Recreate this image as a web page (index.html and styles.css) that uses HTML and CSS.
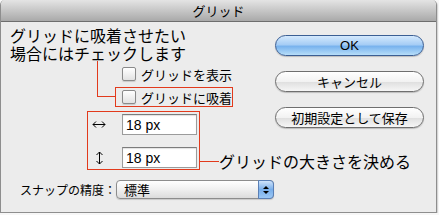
FILE: index.html
```html
<!DOCTYPE html>
<html>
 <head>
  <meta charset="utf-8">
  <title>グリッド</title>
  <link rel="stylesheet" href="styles.css">
 </head>
 <body>
  <div class="window">
   <div class="titlebar">グリッド</div>
   <div class="content">
    <div class="left">
     <p class="note">グリッドに吸着させたい<br>場合にはチェックします</p>
     <div class="check"><span class="box"></span>グリッドを表示</div>
     <div class="check marked"><span class="box"></span>グリッドに吸着</div>
     <div class="sizerow">
      <div class="sizebox">
       <div class="field">
        <span class="axis">
         <svg width="14" height="9" viewBox="0 0 14 9"><path d="M1 4.5H13M1 4.5L4 1.5M1 4.5L4 7.5M13 4.5L10 1.5M13 4.5L10 7.5" stroke="#000" stroke-width="1" fill="none"/></svg>
        </span>
        <input class="num" type="text" value="18 px">
       </div>
       <div class="field">
        <span class="axis">
         <svg width="9" height="14" viewBox="0 0 9 14"><path d="M4.5 1V13M4.5 1L1.5 4M4.5 1L7.5 4M4.5 13L1.5 10M4.5 13L7.5 10" stroke="#000" stroke-width="1" fill="none"/></svg>
        </span>
        <input class="num" type="text" value="18 px">
       </div>
      </div>
      <span class="leader"></span>
      <span class="note">グリッドの大きさを決める</span>
     </div>
     <div class="snap">
      <span class="label">スナップの精度：</span>
      <div class="popup">標準<span class="arrows"><i class="up"></i><i class="down"></i></span></div>
     </div>
    </div>
    <div class="buttons">
     <div class="btn default">OK</div>
     <div class="btn">キャンセル</div>
     <div class="btn">初期設定として保存</div>
    </div>
   </div>
   <span class="callout"></span>
  </div>
 </body>
</html>
```

FILE: styles.css
```css
body {
    margin: 0;
    background: #f7f7f7;
    font-family: "Noto Sans CJK JP", "Liberation Sans", sans-serif;
    color: #000;
}
.window {
    position: relative;
    width: 435px;
    height: 212px;
    border: 1px solid #8e8e8e;
    border-top: none;
    border-radius: 5px 5px 0 0;
    background: #ececec;
    box-shadow: 1px 1px 1px rgba(0, 0, 0, 0.15);
    overflow: hidden;
}
.titlebar {
    height: 21px;
    line-height: 21px;
    border-bottom: 1px solid #6e6e6e;
    background: linear-gradient(#e4e4e4, #a9a9a9);
    text-align: center;
    font-size: 13px;
}
.content {
    display: flex;
}
.left {
    width: 264px;
    padding-left: 9px;
    white-space: nowrap;
}
.note {
    margin: 4px 0 0 0;
    font-size: 16px;
    line-height: 18px;
}
.check {
    display: flex;
    align-items: center;
    width: 110px;
    height: 18px;
    margin: 2px 0 0 105px;
    padding-left: 6px;
    border: 1px solid transparent;
    font-size: 13px;
}
.check.marked {
    margin-top: 3px;
    border-color: #e23a1c;
}
.box {
    width: 12px;
    height: 12px;
    margin-right: 5px;
    border: 1px solid #8a8a8a;
    border-radius: 2px;
    background: linear-gradient(#ffffff, #e2e2e2);
    box-shadow: 0 1px 1px rgba(0, 0, 0, 0.15);
}
.sizerow {
    display: flex;
    align-items: flex-end;
    margin-top: 4px;
}
.sizebox {
    display: flex;
    flex-direction: column;
    flex-shrink: 0;
    gap: 12px;
    width: 109px;
    margin-left: 77px;
    padding: 2px 2px 1px 0;
    border: 1px solid #e23a1c;
}
.field {
    display: flex;
    align-items: center;
    justify-content: space-between;
}
.axis {
    display: flex;
    justify-content: center;
    width: 20px;
    margin-left: 1px;
}
.num {
    box-sizing: border-box;
    width: 75px;
    height: 21px;
    margin: 0;
    padding: 1px 3px 0;
    border: 1px solid #9b9b9b;
    border-top-color: #7c7c7c;
    box-shadow: inset 0 1px 1px rgba(0, 0, 0, 0.12);
    background: #fff;
    font-family: "Liberation Sans", sans-serif;
    font-size: 14px;
    color: #000;
}
.leader {
    flex-shrink: 0;
    width: 19px;
    margin-bottom: 8px;
    border-top: 1px solid #e23a1c;
}
.sizerow .note {
    margin: 0;
    line-height: 18px;
}
.snap {
    display: flex;
    align-items: center;
    margin: 10px 0 0 10px;
    font-size: 12px;
}
.label {
    width: 101px;
}
.popup {
    position: relative;
    box-sizing: border-box;
    width: 166px;
    height: 19px;
    padding-left: 7px;
    line-height: 17px;
    border: 1px solid #8d8d8d;
    border-radius: 4px;
    background: linear-gradient(#ffffff, #f0f0f0 50%, #dcdcdc);
    box-shadow: 0 1px 1px rgba(0, 0, 0, 0.15);
    font-size: 13px;
}
.arrows {
    position: absolute;
    top: -1px;
    right: -1px;
    width: 16px;
    height: 19px;
    border: 1px solid #5a7fb5;
    box-sizing: border-box;
    border-radius: 0 4px 4px 0;
    background: linear-gradient(#cfe3fb, #78aeea 50%, #9cc8f5);
    display: flex;
    flex-direction: column;
    align-items: center;
    justify-content: center;
    gap: 2px;
}
.up, .down {
    width: 0;
    height: 0;
    border-left: 3px solid transparent;
    border-right: 3px solid transparent;
}
.up {
    border-bottom: 3px solid #000;
}
.down {
    border-top: 3px solid #000;
}
.buttons {
    display: flex;
    flex-direction: column;
    gap: 15px;
    margin-left: 1px;
    padding-top: 13px;
}
.btn {
    box-sizing: border-box;
    width: 149px;
    height: 21px;
    line-height: 19px;
    border: 1px solid #6f6f6f;
    border-radius: 11px;
    background: linear-gradient(#ffffff, #f2f2f2 50%, #e0e0e0 55%, #f6f6f6);
    box-shadow: 0 1px 1px rgba(0, 0, 0, 0.2);
    text-align: center;
    font-size: 13px;
}
.btn.default {
    border-color: #3c5f94;
    background: linear-gradient(#d4e9fd, #a6cdf5 45%, #79b3ee 55%, #b7def9);
    font-family: "Liberation Sans", sans-serif;
}
.callout {
    position: absolute;
    left: 96px;
    top: 61px;
    width: 18px;
    height: 35px;
    border-left: 1px solid #e23a1c;
    border-bottom: 1px solid #e23a1c;
}
```
